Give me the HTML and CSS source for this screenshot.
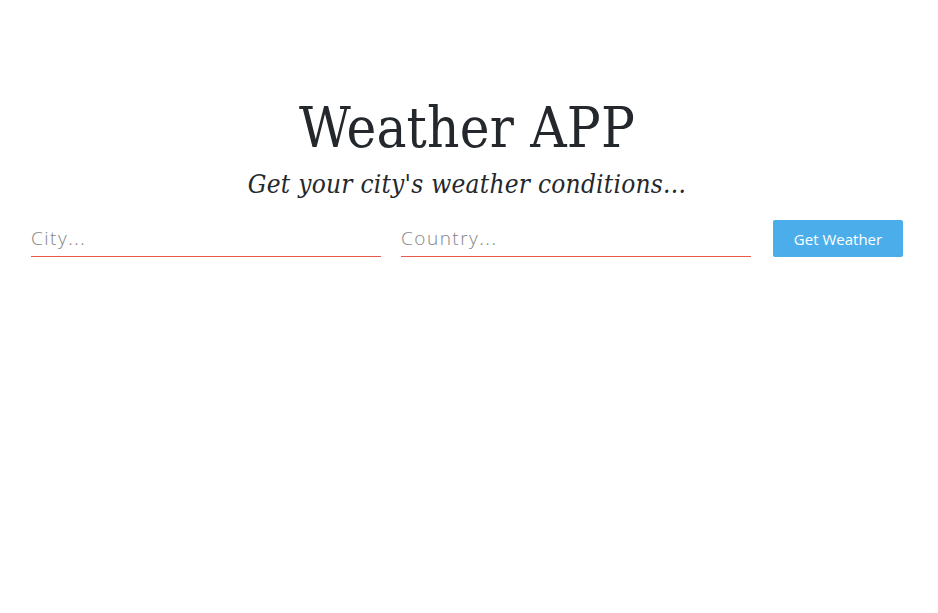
FILE: index.html
```html
<!DOCTYPE html>
<html>
<head>
<meta charset="utf-8">
<link rel="stylesheet" href="styles.css">
</head>
<body>
<main class="app">
  <h1 class="title">Weather APP</h1>
  <p class="subtitle">Get your city's weather conditions...</p>
  <form class="search">
    <input class="field" type="text" placeholder="City...">
    <input class="field" type="text" placeholder="Country...">
    <button class="btn" type="button">Get Weather</button>
  </form>
</main>
</body>
</html>
```
FILE: styles.css
```css
html, body { margin: 0; padding: 0; background: #fff; }
.app { padding: 96px 35px 0 31px; display: flex; flex-direction: column; align-items: center; }
.title {
  margin: 0;
  font-family: "DejaVu Serif", serif;
  font-stretch: condensed;
  font-weight: 400;
  font-size: 56px;
  line-height: 64px;
  letter-spacing: 0.2px;
  color: #24282c;
}
.subtitle {
  margin: 9px 0 0;
  font-family: "DejaVu Serif", serif;
  font-stretch: condensed;
  font-style: italic;
  font-size: 26px;
  line-height: 30px;
  letter-spacing: 0.25px;
  color: #24282c;
}
.search { align-self: stretch; display: flex; align-items: flex-end; gap: 20px; margin-top: 21px; }
.field {
  width: 350px; box-sizing: border-box;
  border: none;
  border-bottom: 1px solid #e8594c;
  border-radius: 0;
  padding: 0 0 5px 0;
  font-family: "Open Sans", sans-serif; font-weight: 300;
  font-size: 19px; letter-spacing: 1.5px; color: #333;
  outline: none; background: transparent;
}
.field::placeholder { color: #858585; }
.btn {
  margin-left: 2px;
  width: 130px; height: 37px;
  border: 0; border-radius: 2px;
  background: #4baeea; color: #fff;
  font-family: "Open Sans", sans-serif; font-size: 15px; font-weight: 400;
}
```
